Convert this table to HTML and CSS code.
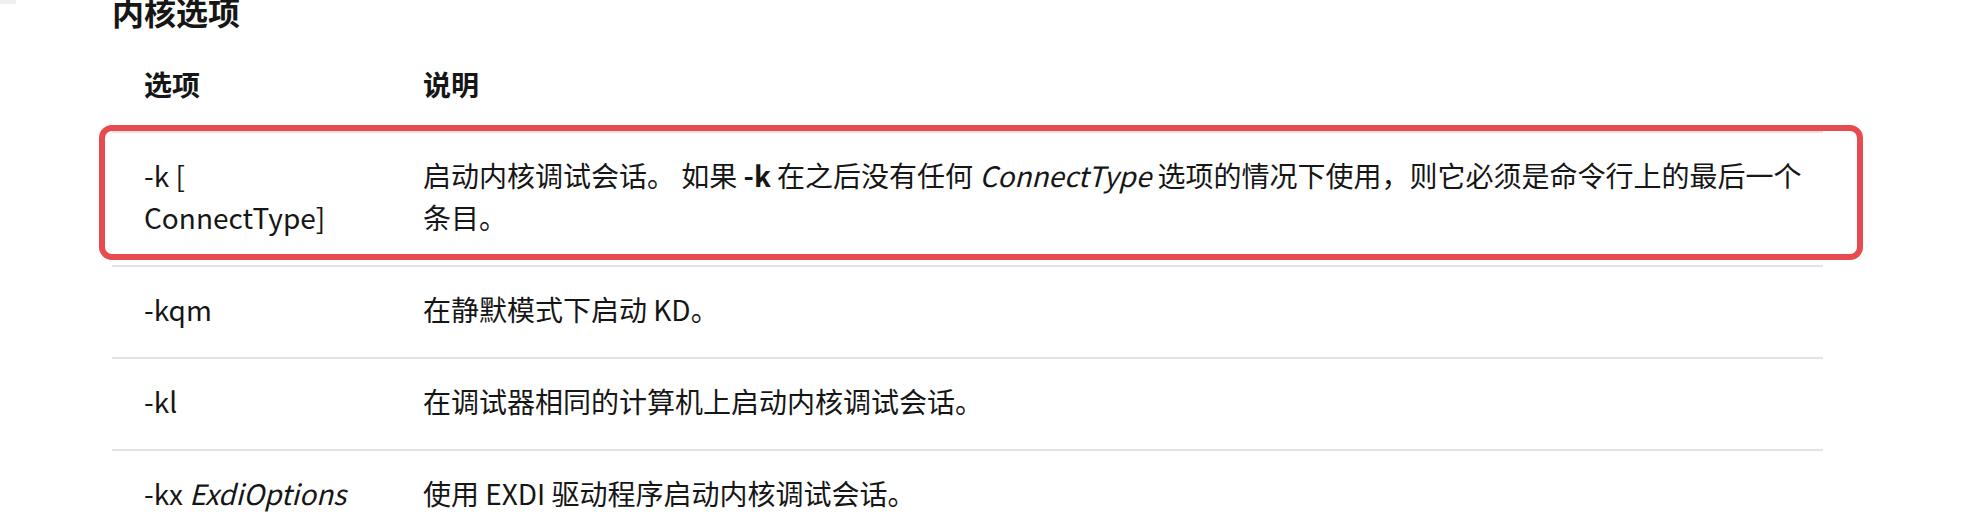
FILE: index.html
```html
<!DOCTYPE html>
<html lang="zh-CN">
<head>
<meta charset="utf-8">
<title>内核选项</title>
<link rel="stylesheet" href="styles.css">
</head>
<body>
<div class="corner"></div>
<div class="page">
  <h2 class="title">内核选项</h2>
  <table class="opts">
    <colgroup><col class="col-opt"><col class="col-desc"></colgroup>
    <thead>
      <tr><th>选项</th><th>说明</th></tr>
    </thead>
    <tbody>
      <tr>
        <td>-k [<br>ConnectType]</td>
        <td><span class="line">启动内核调试会话。 如果 <strong>-k</strong> 在之后没有任何 <em>ConnectType</em> 选项的情况下使用，则它必须是命令行上的最后一个</span><br>条目。</td>
      </tr>
      <tr>
        <td>-kqm</td>
        <td>在静默模式下启动 KD。</td>
      </tr>
      <tr>
        <td>-kl</td>
        <td>在调试器相同的计算机上启动内核调试会话。</td>
      </tr>
      <tr>
        <td>-kx <em>ExdiOptions</em></td>
        <td>使用 EXDI 驱动程序启动内核调试会话。</td>
      </tr>
    </tbody>
  </table>
  <div class="annot"></div>
</div>
</body>
</html>
```

FILE: styles.css
```css
html, body {
  margin: 0;
  padding: 0;
  background: #ffffff;
}

body {
  font-family: "Noto Sans CJK SC", "Noto Sans", sans-serif;
  color: #161616;
  width: 1972px;
  height: 528px;
  overflow: hidden;
  position: relative;
}

.corner {
  position: absolute;
  left: 0;
  top: 0;
  width: 16px;
  height: 4px;
  background: #eeeeee;
}

.page {
  position: relative;
  margin-left: 112px;
  width: 1711px;
}

.title {
  margin: 0;
  font-size: 32px;
  line-height: 22px;
  font-weight: 600;
}

.opts {
  margin-top: 19px;
  width: 1711px;
  border-collapse: collapse;
  table-layout: fixed;
  font-size: 28px;
  line-height: 42px;
}

.col-opt { width: 279px; }
.col-desc { width: 1432px; }

.opts th,
.opts td {
  text-align: left;
  vertical-align: top;
  padding: 21px 32px 27px;
  border-bottom: 2px solid #e3e3e3;
}

.opts th {
  font-weight: 600;
  padding-top: 22px;
  padding-bottom: 26px;
}

.opts td {
  font-weight: 400;
}

.opts strong { font-weight: 700; }
.opts em { font-style: italic; }

.line { white-space: nowrap; }

.annot {
  position: absolute;
  left: -13px;
  top: 125px;
  width: 1764px;
  height: 135px;
  box-sizing: border-box;
  border: 6px solid #e84b4f;
  border-radius: 13px;
}
```
